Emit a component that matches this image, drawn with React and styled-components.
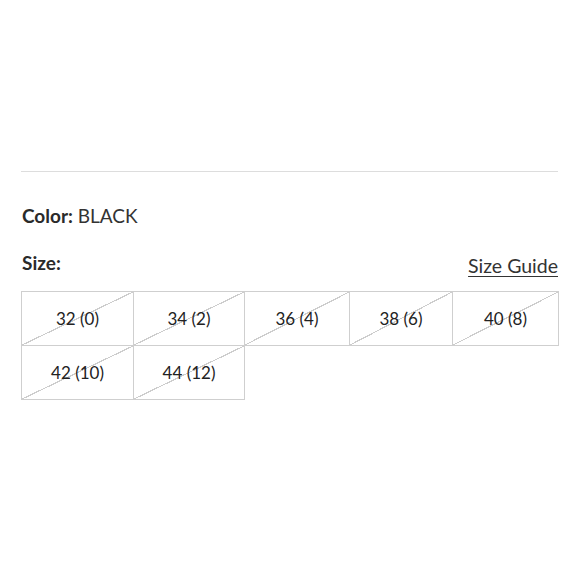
import React from 'react';
import styled, { createGlobalStyle } from 'styled-components';

const GlobalStyle = createGlobalStyle`
  html, body { margin: 0; padding: 0; background: #fff; }
  body { font-family: Lato, "Noto Sans", sans-serif; color: #222; }
`;

const sizes = ['32 (0)', '34 (2)', '36 (4)', '38 (6)', '40 (8)', '42 (10)', '44 (12)'];

const Page = styled.div`
  width: 580px;
  height: 580px;
  box-sizing: border-box;
  padding: 171px 22px 0 21px;
`;

const Rule = styled.div`
  height: 1px;
  background: #ddd;
`;

const Label = styled.div`
  font-size: 19px;
  line-height: 22px;
  color: #2a2a2a;
  b { font-weight: 700; }
  span { font-weight: 400; color: #333; }
`;

const ColorLine = styled(Label)`
  margin-top: 33px;
  padding-left: 1px;
`;

const SizeRow = styled.div`
  display: flex;
  justify-content: space-between;
  align-items: flex-end;
  margin-top: 25px;
  padding-left: 1px;
`;

const GuideLink = styled.a`
  font-size: 19.5px;
  line-height: 22px;
  color: #333;
  text-decoration: underline;
  text-underline-offset: 3px;
  text-decoration-thickness: 1px;
  margin-bottom: -3px;
`;

const Grid = styled.div`
  display: grid;
  grid-template-columns: 112px 111px 105px 103px 106px;
  grid-auto-rows: 54px;
  margin-top: 17px;
  border-top: 1px solid #cfcfcf;
  border-left: 1px solid #cfcfcf;
  width: max-content;
`;

const Cell = styled.div`
  display: flex;
  align-items: center;
  justify-content: center;
  font-size: 17px;
  color: #222;
  border-right: 1px solid #cfcfcf;
  border-bottom: 1px solid #cfcfcf;
  background: linear-gradient(
    to bottom right,
    transparent calc(50% - 0.6px),
    #cdcdcd calc(50% - 0.6px),
    #cdcdcd calc(50% + 0.6px),
    transparent calc(50% + 0.6px)
  );
`;

export default function App() {
  return (
    <>
      <GlobalStyle />
      <Page>
        <Rule />
        <ColorLine><b>Color:</b> <span>BLACK</span></ColorLine>
        <SizeRow>
          <Label><b>Size:</b></Label>
          <GuideLink href="#">Size Guide</GuideLink>
        </SizeRow>
        <Grid>
          {sizes.map((s) => (
            <Cell key={s}>{s}</Cell>
          ))}
        </Grid>
      </Page>
    </>
  );
}
